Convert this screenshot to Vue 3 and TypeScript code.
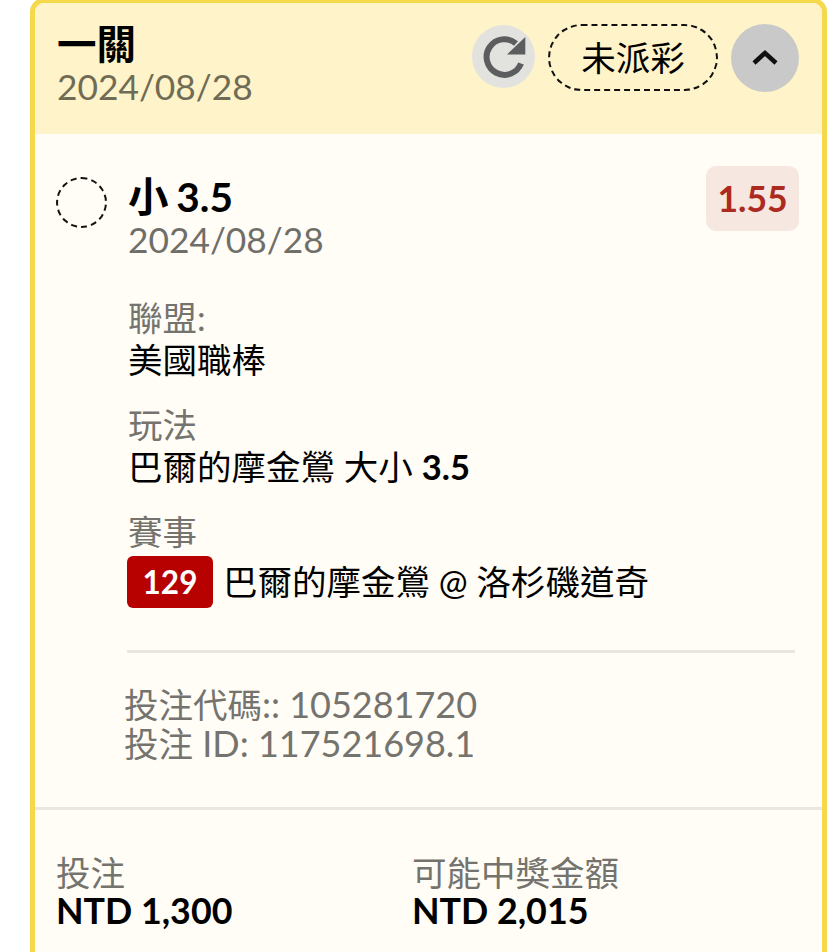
<script setup lang="ts">
const details = [
  { label: "聯盟:", value: "美國職棒" },
  { label: "玩法", value: "巴爾的摩金鶯 大小 ", strong: "3.5" },
];
</script>

<template>
  <div class="page">
    <div class="card">
      <div class="head">
        <div class="head-text">
          <div class="title">一關</div>
          <div class="date">2024/08/28</div>
        </div>
        <div class="head-actions">
          <button class="refresh">
            <svg width="46" height="46" viewBox="0 0 46 46">
              <path d="M40 29.5A17.8 17.8 0 1 1 35 9.5" fill="none" stroke="#5c5d5f" stroke-width="6" />
              <path d="M44.3 3V20.5H26Z" fill="#5c5d5f" />
            </svg>
          </button>
          <div class="status">未派彩</div>
          <button class="toggle">
            <svg width="28" height="18" viewBox="0 0 28 18">
              <path d="M3 14L14 4L25 14" fill="none" stroke="#111" stroke-width="4.5" />
            </svg>
          </button>
        </div>
      </div>

      <div class="body">
        <div class="leg">
          <div class="circle"></div>
          <div class="leg-main">
            <div class="leg-top">
              <div>
                <div class="pick">小 3.5</div>
                <div class="leg-date">2024/08/28</div>
              </div>
              <div class="odds">1.55</div>
            </div>

            <div v-for="d in details" :key="d.label" class="detail">
              <div class="label">{{ d.label }}</div>
              <div class="value">{{ d.value }}<b v-if="d.strong">{{ d.strong }}</b></div>
            </div>
            <div class="detail">
              <div class="label">賽事</div>
              <div class="match">
                <span class="num">129</span>
                <span class="value">巴爾的摩金鶯 @ 洛杉磯道奇</span>
              </div>
            </div>
          </div>
        </div>
        <div class="rule"></div>
        <div class="codes">
          <div><span class="cjk">投注代碼</span>:: 105281720</div>
          <div><span class="cjk">投注</span> ID: 117521698.1</div>
        </div>
      </div>

      <div class="foot">
        <div class="amount">
          <div class="label">投注</div>
          <div class="money">NTD 1,300</div>
        </div>
        <div class="amount">
          <div class="label">可能中獎金額</div>
          <div class="money">NTD 2,015</div>
        </div>
      </div>
    </div>
  </div>
</template>

<style>
html,
body {
  margin: 0;
  background: #fff;
}
</style>

<style scoped>
.page {
  height: 952px;
  overflow: hidden;
  padding-left: 30px;
  font-family: Lato, "Noto Sans CJK TC", sans-serif;
  color: #000;
}
.card {
  box-sizing: border-box;
  width: 797px;
  height: 1000px;
  margin-top: -2px;
  border: 5px solid #f5d84c;
  border-radius: 14px;
  background: #fffdf6;
  overflow: hidden;
}
.head {
  display: flex;
  justify-content: space-between;
  height: 131px;
  padding: 21px 23px 0 22px;
  box-sizing: border-box;
  background: #fef3c9;
}
.title {
  font-size: 39.5px;
  line-height: 40px;
  font-weight: 700;
}
.date {
  margin-top: 5px;
  font-size: 35.3px;
  line-height: 36px;
  color: #706b55;
}
.head-actions {
  display: flex;
  align-items: flex-start;
}
.refresh {
  display: flex;
  align-items: center;
  justify-content: center;
  width: 63px;
  height: 63px;
  margin-top: 1px;
  padding: 0;
  border: none;
  border-radius: 50%;
  background: #e2e3df;
}
.status {
  box-sizing: border-box;
  width: 170px;
  height: 67px;
  margin-left: 13px;
  border: 2px dashed #111;
  border-radius: 34px;
  font-size: 34.5px;
  line-height: 63px;
  text-align: center;
}
.toggle {
  display: flex;
  align-items: center;
  justify-content: center;
  width: 68px;
  height: 68px;
  margin-left: 13px;
  padding: 0;
  border: none;
  border-radius: 50%;
  background: #c9c9c9;
}
.body {
  padding: 32px 23px 0 21px;
}
.leg {
  display: flex;
  gap: 21px;
}
.circle {
  box-sizing: border-box;
  flex: none;
  width: 51px;
  height: 51px;
  margin-top: 11px;
  border: 2px dashed #111;
  border-radius: 50%;
}
.leg-main {
  flex: 1;
}
.leg-top {
  display: flex;
  justify-content: space-between;
  align-items: flex-start;
  margin-bottom: 40px;
}
.pick {
  margin-top: 9px;
  font-size: 40.5px;
  line-height: 44px;
  font-weight: 700;
  word-spacing: -2px;
}
.leg-date {
  margin-top: 4px;
  font-size: 35.3px;
  line-height: 34px;
  color: #6f6e69;
}
.odds {
  box-sizing: border-box;
  width: 93px;
  height: 65px;
  border-radius: 10px;
  background: #f6e8e0;
  color: #ad2a20;
  font-size: 35.5px;
  font-weight: 700;
  line-height: 65px;
  text-align: center;
}
.detail {
  margin-top: 23px;
}
.label {
  font-size: 34.5px;
  line-height: 42px;
  color: #74736e;
}
.value {
  font-size: 34.5px;
  line-height: 42px;
}
.value b {
  font-weight: 700;
}
.match {
  display: flex;
  align-items: center;
  gap: 10px;
  margin: 3px 0 0 -1px;
}
.num {
  width: 86px;
  height: 52px;
  border-radius: 6px;
  background: #b70000;
  color: #fff;
  font-size: 31.5px;
  font-weight: 700;
  line-height: 52px;
  text-align: center;
}
.rule {
  height: 3px;
  margin: 42px 4px 0 71px;
  background: #e9e7e0;
}
.codes {
  margin: 32px 0 0 68px;
  font-size: 36px;
  line-height: 39px;
  color: #74736e;
}
.cjk {
  font-size: 34.5px;
}
.foot {
  display: flex;
  margin-top: 44px;
  padding: 44px 21px 0;
  border-top: 3px solid #e9e7e0;
}
.amount {
  width: 356px;
}
.amount .label {
  line-height: 38px;
}
.money {
  font-size: 35.8px;
  line-height: 38px;
  font-weight: 700;
}
</style>
